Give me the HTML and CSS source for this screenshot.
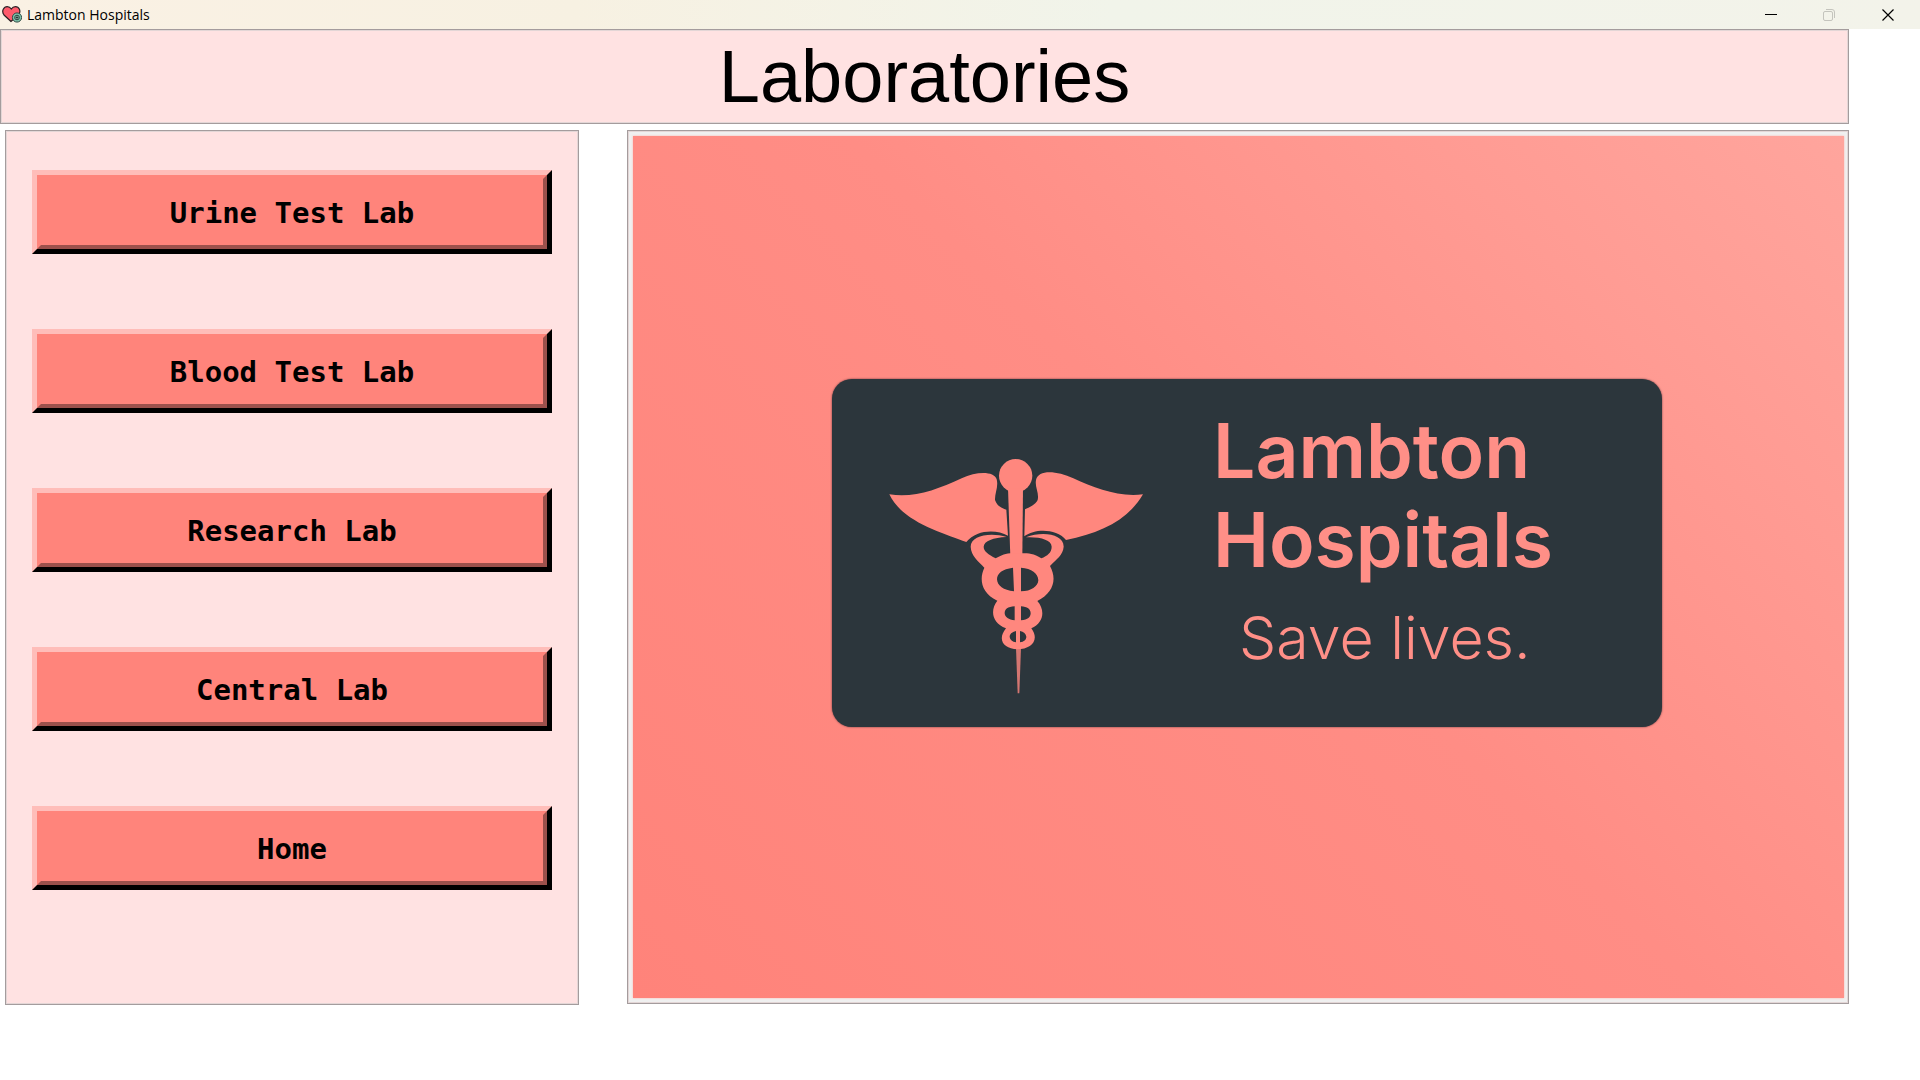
FILE: index.html
```html
<!DOCTYPE html>
<html lang="en">
<head>
<meta charset="utf-8">
<title>Lambton Hospitals</title>
<link rel="stylesheet" href="styles.css">
</head>
<body>
<div class="titlebar">
  <svg class="app-icon" width="20" height="18" viewBox="0 0 20 18" aria-hidden="true">
    <path d="M9 15.500L2 9C-1 5 2 .7 5.200.7 7 .7 8.300 1.500 9.300 3 10.300 1.500 11.600.7 13.400.7 17 .7 19.500 5 16.500 9z" fill="#ff5b6c" stroke="#2b2024" stroke-width="1.200"/>
    <circle cx="15" cy="11.500" r="4.600" fill="#7fc4ad" stroke="#2f4a45"/>
    <circle cx="15" cy="11.500" r="2.300" fill="#b9e4d4" stroke="#243c38"/>
    <path d="M15 10v3M13.500 11.500h3" stroke="#243c38"/>
  </svg>
  <span class="app-name">Lambton Hospitals</span>
  <div class="window-controls">
    <button type="button" class="control" aria-label="Minimize"><svg width="14" height="14" viewBox="0 0 14 14"><path d="M1 6.500h12" stroke="#000"/></svg></button>
    <button type="button" class="control" aria-label="Restore" disabled><svg width="14" height="14" viewBox="0 0 14 14"><g fill="none" stroke="#c4c4bd"><rect x="1.500" y="3.500" width="9" height="9" rx="1.500"/><path d="M4 1.500h6a2.500 2.500 0 0 1 2.500 2.500v6"/></g></svg></button>
    <button type="button" class="control" aria-label="Close"><svg width="14" height="14" viewBox="0 0 14 14"><path d="M1.500 1.500l11 11M12.500 1.500l-11 11" stroke="#000" stroke-width="1.200"/></svg></button>
  </div>
</div>
<div class="window">
  <header class="banner frame"><h1>Laboratories</h1></header>
  <main class="content">
    <nav class="menu frame" aria-label="Laboratories">
      <button type="button" class="lab-button">Urine Test Lab</button>
      <button type="button" class="lab-button">Blood Test Lab</button>
      <button type="button" class="lab-button">Research Lab</button>
      <button type="button" class="lab-button">Central Lab</button>
      <button type="button" class="lab-button">Home</button>
    </nav>
    <section class="display frame">
      <div class="picture">
        <div class="brand">
          <svg class="caduceus" viewBox="0 0 900 810" aria-hidden="true">
            <g fill="#ff877e">
              <path d="M58 163C130 175 200 150 275 115C320 94 372 93 380 118C386 140 374 160 375 180C382 200 398 205 409 209L414 287C380 268 320 268 289 306C220 280 95 245 58 163z"/>
              <path d="M819 163C745 172 675 145 610 115C560 92 505 88 498 120C494 142 508 158 503 180C496 194 478 202 465 208L463 289C495 265 560 266 588 300C690 280 775 240 819 163z"/>
              <circle cx="437" cy="107" r="50"/>
              <path d="M414 145h45L457 350H421z"/>
              <path fill-rule="evenodd" d="M410 291C360 276 302 287 302 320C303 348 325 363 343 383C328 415 331 458 382 482C360 510 365 548 408 565C380 600 402 626 442 628C484 628 510 600 484 565C522 548 526 510 502 483C550 458 562 418 540 378C560 357 579 345 581 320C582 284 520 272 468 292C510 290 545 300 545 320C545 338 532 347 514 355C492 341 475 340 457 340H421C400 342 390 349 377 355C355 343 341 334 341 320C342 303 370 293 410 291zM429 383C397 387 381 400 381 418C382 437 400 451 432 454zM453 383V454C484 454 504 439 505 421C504 399 485 386 453 383zM434 499C413 500 404 508 404 520C405 532 416 539 434 541zM453 499V541C474 540 482 531 482 520C482 508 472 500 453 499zM438 573C425 576 419 583 419 591C420 600 427 605 438 607zM450 573V607C462 605 469 599 469 590C468 582 461 575 450 573z"/>
              <path d="M438 624h15L448 760h-5z" opacity=".8"/>
            </g>
          </svg>
          <div class="brand-text">
            <p class="brand-name">Lambton<br>Hospitals</p>
            <p class="brand-motto">Save lives.</p>
          </div>
        </div>
      </div>
    </section>
  </main>
</div>
</body>
</html>
```
FILE: styles.css
```css
* {
  box-sizing: border-box;
}

body {
  margin: 0;
  background: #fff;
  color: #000;
  font-family: "Liberation Sans", Arial, sans-serif;
}

.titlebar {
  display: flex;
  align-items: center;
  height: 29px;
  padding: 0 2px;
  background: linear-gradient(90deg, #faf1e4, #f7f1e2 30%, #f1f4ea 58%, #f3f3ea);
}

.app-icon {
  flex: none;
}

.app-name {
  margin-left: 5px;
  font: 14px/20px "Open Sans", "Noto Sans", sans-serif;
}

.window-controls {
  display: flex;
  margin-left: auto;
}

.control {
  display: grid;
  place-items: center;
  width: 58px;
  height: 28px;
  padding: 0;
  border: 0;
  background: none;
}

.control:last-child {
  width: 60px;
}

.window {
  padding-right: 71px;
}

.frame {
  border: 1px solid #a49c9d;
  box-shadow: inset 0 0 0 1px #e3d6d6;
}

.banner {
  display: grid;
  place-items: center;
  height: 95px;
  background: #ffe2e2;
}

.banner h1 {
  margin: 0;
  font-size: 74px;
  font-weight: 400;
  line-height: 84px;
}

.content {
  display: grid;
  grid-template-columns: 574fr 1222fr;
  align-items: start;
  gap: 48px;
  padding: 6px 0 0 5px;
}

.menu {
  display: flex;
  flex-direction: column;
  gap: 75px;
  padding: 39px 26px 114px;
  background: #ffe2e2;
}

.lab-button {
  position: relative;
  height: 84px;
  padding: 2px 0 0;
  border: 5px solid;
  border-color: #ffbdb9 #000 #000 #ffbdb9;
  background: #ff847b;
  color: #000;
  font: bold 29px/36px "DejaVu Sans Mono", "Liberation Mono", monospace;
}

.lab-button::after {
  content: "";
  position: absolute;
  inset: 0;
  border: 4px solid;
  border-color: transparent #9c514c #9c514c transparent;
}

.display {
  padding: 5px 4px 5px 5px;
  background: #f0f0f0;
}

.picture {
  padding: 243px 182px 271px 199px;
  background: linear-gradient(45deg, #ff837a, #ff8d85 52%, #ffa59d);
  box-shadow: 0 0 2px #ffb5af;
}

.brand {
  display: flex;
  justify-content: space-between;
  height: 348px;
  padding: 27px 109px 0 38px;
  border-radius: 20px;
  background: #2c363c;
  box-shadow: 0 0 2px #59343a;
}

.caduceus {
  flex: none;
  width: 300px;
  height: 270px;
  margin-top: 34px;
}

.brand-text {
  color: #ff8f87;
  font-family: Inter, sans-serif;
}

.brand-name {
  margin: 0;
  font-size: 75px;
  font-weight: 600;
  line-height: 89px;
}

.brand-motto {
  margin: 18px 0 0 26px;
  font-size: 59px;
  font-weight: 300;
  line-height: 72px;
}
```
